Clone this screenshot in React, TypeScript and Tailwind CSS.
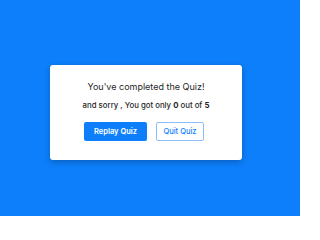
export default function App() {
  return (
    <div
      className="flex h-[216px] w-[300px] items-center justify-center bg-[#0d7ffb] pt-[9px] pr-2"
      style={{ fontFamily: "Inter, 'Open Sans', sans-serif" }}
    >
      <div className="flex h-[95px] w-[192px] flex-col items-center rounded-[3px] bg-white pt-[16px] shadow-[0_2px_6px_rgba(0,0,0,0.25)]">
        <h2 className="text-[9px] leading-[12px] font-normal text-[#1f1f1f]">You've completed the Quiz!</h2>
        <p className="mt-[7px] text-[7.8px] leading-[10px] font-medium text-[#1f1f1f]">
          and sorry , You got only <b className="font-bold">0</b> out of <b className="font-bold">5</b>
        </p>
        <div className="mt-[12px] mr-[4px] flex gap-[9px]">
          <button className="h-[19px] w-[63px] rounded-[2px] bg-[#0d7ffb] text-[7.5px] font-semibold text-white">
            Replay Quiz
          </button>
          <button className="h-[19px] w-[48px] rounded-[2px] border border-[#8fbdf7] bg-white text-[7.5px] font-medium text-[#0d7ffb]">
            Quit Quiz
          </button>
        </div>
      </div>
    </div>
  );
}
